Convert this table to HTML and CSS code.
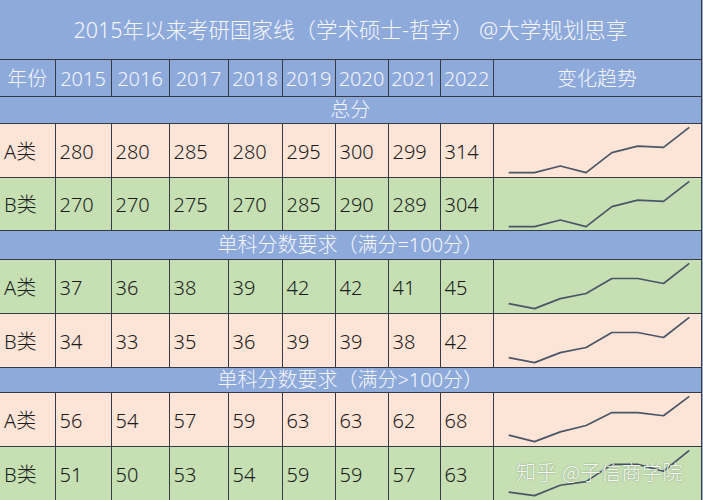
FILE: index.html
```html
<!DOCTYPE html>
<html lang="zh-CN">
<head>
<meta charset="utf-8">
<title>2015年以来考研国家线（学术硕士-哲学）</title>
<link rel="stylesheet" href="styles.css">
</head>
<body>
<div class="page">
<table class="sheet">
  <colgroup>
    <col class="c0"><col class="c1"><col class="c2"><col class="c3"><col class="c4"><col class="c5"><col class="c6"><col class="c7"><col class="c8"><col class="c9">
  </colgroup>
  <tr class="title-row"><td colspan="10">2015年以来考研国家线（学术硕士-哲学） @大学规划思享</td></tr>
  <tr class="year-row">
    <th>年份</th><th>2015</th><th>2016</th><th>2017</th><th>2018</th><th>2019</th><th>2020</th><th>2021</th><th>2022</th><th>变化趋势</th>
  </tr>
  <tr class="section-row s1"><td colspan="10">总分</td></tr>
  <tr class="data-row peach">
    <td>A类</td><td>280</td><td>280</td><td>285</td><td>280</td><td>295</td><td>300</td><td>299</td><td>314</td>
    <td class="trend"><svg viewBox="0 0 208 54" preserveAspectRatio="none"><polyline points="14.7,50.5 40.5,50.5 66.3,43.6 92.1,50.5 117.9,29.8 143.7,22.9 169.5,24.2 195.3,3.5"/></svg></td>
  </tr>
  <tr class="data-row green h53">
    <td>B类</td><td>270</td><td>270</td><td>275</td><td>270</td><td>285</td><td>290</td><td>289</td><td>304</td>
    <td class="trend"><svg viewBox="0 0 208 54" preserveAspectRatio="none"><polyline points="14.7,50.5 40.5,50.5 66.3,43.6 92.1,50.5 117.9,29.8 143.7,22.9 169.5,24.2 195.3,3.5"/></svg></td>
  </tr>
  <tr class="section-row s2"><td colspan="10">单科分数要求（满分=100分）</td></tr>
  <tr class="data-row green">
    <td>A类</td><td>37</td><td>36</td><td>38</td><td>39</td><td>42</td><td>42</td><td>41</td><td>45</td>
    <td class="trend"><svg viewBox="0 0 208 54" preserveAspectRatio="none"><polyline points="14.7,45.3 40.5,50.5 66.3,40.1 92.1,34.8 117.9,19.2 143.7,19.2 169.5,24.4 195.3,3.5"/></svg></td>
  </tr>
  <tr class="data-row peach">
    <td>B类</td><td>34</td><td>33</td><td>35</td><td>36</td><td>39</td><td>39</td><td>38</td><td>42</td>
    <td class="trend"><svg viewBox="0 0 208 54" preserveAspectRatio="none"><polyline points="14.7,45.3 40.5,50.5 66.3,40.1 92.1,34.8 117.9,19.2 143.7,19.2 169.5,24.4 195.3,3.5"/></svg></td>
  </tr>
  <tr class="section-row s3"><td colspan="10">单科分数要求（满分&gt;100分）</td></tr>
  <tr class="data-row peach">
    <td>A类</td><td>56</td><td>54</td><td>57</td><td>59</td><td>63</td><td>63</td><td>62</td><td>68</td>
    <td class="trend"><svg viewBox="0 0 208 54" preserveAspectRatio="none"><polyline points="14.7,43.8 40.5,50.5 66.3,40.4 92.1,33.7 117.9,20.3 143.7,20.3 169.5,23.6 195.3,3.5"/></svg></td>
  </tr>
  <tr class="data-row green">
    <td>B类</td><td>51</td><td>50</td><td>53</td><td>54</td><td>59</td><td>59</td><td>57</td><td>63</td>
    <td class="trend"><svg viewBox="0 0 208 54" preserveAspectRatio="none"><polyline points="14.7,46.9 40.5,50.5 66.3,39.7 92.1,36.0 117.9,18.0 143.7,18.0 169.5,25.2 195.3,3.5"/></svg></td>
  </tr>
</table>
<div class="watermark">知乎 @子信商学院</div>
</div>
</body>
</html>
```

FILE: styles.css
```css
html, body {
  margin: 0;
  padding: 0;
  background: #8eaadb;
}
body {
  width: 703px;
  height: 500px;
  overflow: hidden;
  font-family: "Noto Sans", "Noto Sans CJK SC", sans-serif;
  font-weight: 300;
}
.page {
  position: relative;
  width: 703px;
  height: 500px;
  overflow: hidden;
}
.sheet {
  border-collapse: collapse;
  table-layout: fixed;
  width: 701px;
  font-size: 20px;
  color: #1c1c1c;
}
.c0 { width: 55px; }
.c1 { width: 56px; }
.c2 { width: 58px; }
.c3 { width: 59px; }
.c4 { width: 54px; }
.c5 { width: 53px; }
.c6 { width: 53px; }
.c7 { width: 52px; }
.c8 { width: 53px; }
.c9 { width: 208px; }

.sheet td, .sheet th {
  box-sizing: border-box;
  padding: 0;
  border: 1px solid #363b45;
  white-space: nowrap;
  overflow: hidden;
  line-height: 22px;
  font-weight: 300;
}
.sheet tr > :first-child { border-left: none; }

.title-row td {
  height: 59px;
  background: #8eaadb;
  color: #f4f6fb;
  text-align: center;
  font-size: 21.5px;
  border-top: none;
  padding-top: 2px;
}
.year-row th {
  height: 37px;
  background: #8eaadb;
  color: #f4f6fb;
  text-align: center;
  padding-top: 2px;
}
.section-row td {
  background: #8eaadb;
  color: #f4f6fb;
  text-align: center;
}
.s1 td { height: 27px; }
.s2 td { height: 29px; }
.s3 td { height: 25px; }

.data-row td {
  height: 54px;
  padding-left: 4px;
  padding-top: 3px;
}
.data-row.h53 td { height: 53px; }
.peach td { background: #fce4d6; }
.green td { background: #c6e0b4; }

.data-row td.trend {
  padding: 0;
}
.trend svg {
  display: block;
  width: 208px;
  height: 52px;
}
.trend polyline {
  fill: none;
  stroke: #4b5568;
  stroke-width: 1.7;
  stroke-linejoin: round;
  vector-effect: non-scaling-stroke;
}

.watermark {
  position: absolute;
  left: 516px;
  top: 457px;
  font-family: "Noto Sans CJK SC", sans-serif;
  font-size: 20px;
  color: rgba(255, 255, 255, 0.92);
  text-shadow: 0 0 2px rgba(0, 0, 0, 0.35);
  letter-spacing: 0.5px;
}
```
